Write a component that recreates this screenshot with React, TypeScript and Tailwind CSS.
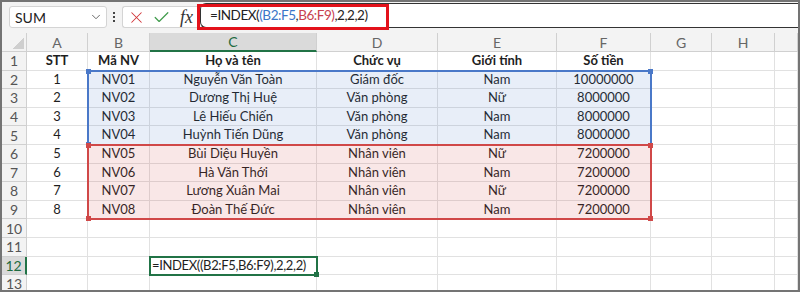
import { ChevronDown, X, Check } from 'lucide-react';

const cols = ['A', 'B', 'C', 'D', 'E', 'F', 'G', 'H', ''];

const header = ['STT', 'Mã NV', 'Họ và tên', 'Chức vụ', 'Giới tính', 'Số tiền'];

const rows = [
    ['1', 'NV01', 'Nguyễn Văn Toàn', 'Giám đốc', 'Nam', '10000000'],
    ['2', 'NV02', 'Dương Thị Huệ', 'Văn phòng', 'Nữ', '8000000'],
    ['3', 'NV03', 'Lê Hiếu Chiến', 'Văn phòng', 'Nam', '8000000'],
    ['4', 'NV04', 'Huỳnh Tiến Dũng', 'Văn phòng', 'Nam', '8000000'],
    ['5', 'NV05', 'Bùi Diệu Huyền', 'Nhân viên', 'Nữ', '7200000'],
    ['6', 'NV06', 'Hà Văn Thới', 'Nhân viên', 'Nam', '7200000'],
    ['7', 'NV07', 'Lương Xuân Mai', 'Nhân viên', 'Nữ', '7200000'],
    ['8', 'NV08', 'Đoàn Thế Đức', 'Nhân viên', 'Nam', '7200000'],
];

const formula = '=INDEX((B2:F5,B6:F9),2,2,2)';

// same track sizes for the cell grid and the overlay grid
const gridCls =
    'grid grid-cols-[25px_61px_62px_167px_121px_119px_94px_61px_63px_1fr] grid-rows-[19px_repeat(13,18.6px)]';

function Handle({ pos, color }: { pos: string; color: string }) {
    return <span className={`absolute w-[5px] h-[5px] ${pos} ${color}`} />;
}

function TopBar() {
    return (
        <div className="relative flex h-[31px] items-start">
            <div className="mt-[4px] ml-[7px] flex h-[22px] w-[98px] items-center justify-between rounded-[3px] border border-[#d4d4d4] bg-white pl-[5px] pr-[3px] text-[14px] text-[#222]">
                SUM
                <ChevronDown size={14} strokeWidth={1.5} color="#555" />
            </div>
            <div className="ml-[6px] mt-[10px] flex flex-col gap-[2px]">
                <span className="h-[2px] w-[2px] bg-[#444]" />
                <span className="h-[2px] w-[2px] bg-[#444]" />
                <span className="h-[2px] w-[2px] bg-[#444]" />
            </div>
            <div className="mt-[4px] ml-[7px] flex h-[22px] w-[75px] items-center gap-[6px] rounded-l-[3px] border border-r-0 border-[#d4d4d4] bg-white pl-[4px]">
                <X size={19} strokeWidth={1.3} color="#d13438" />
                <Check size={19} strokeWidth={1.5} color="#3f9b4b" />
                <span className="ml-[3px] font-['Liberation_Serif',serif] text-[18px] italic leading-none text-[#333]">fx</span>
            </div>
            <div className="mt-[1px] ml-[3px] flex h-[25px] flex-1 items-center rounded-l-[6px] border-y border-l border-[#333] bg-white pl-[9px] text-[13.5px] tracking-[-0.45px] text-[#222]">
                =INDEX(
                <span className="text-[#3b76c8]">(B2:F5</span>,
                <span className="text-[#c8424f]">B6:F9)</span>,2,2,2)
            </div>
            <div className="absolute left-[195px] top-[2px] h-[26px] w-[192px] border-[3px] border-[#e3121b]" />
        </div>
    );
}

function Cells() {
    return (
        <div className={`${gridCls} col-start-1 row-start-1 bg-white text-[13px] text-[#1e1e1e]`}>
            <div className="relative border-b border-r border-[#d0d0d0] bg-[#f3f3f3]">
                <span className="absolute bottom-[2px] right-[2px] h-[11px] w-[11px] bg-[linear-gradient(135deg,transparent_50%,#cfcfcf_50%)]" />
            </div>
            {cols.map((c, i) =>
                c === 'C' ? (
                    <div
                        key={i}
                        className="flex items-center justify-center border-b-2 border-r border-b-[#217346] border-r-[#d0d0d0] bg-[#dadada] text-[14px] text-[#1d6b40]"
                    >
                        {c}
                    </div>
                ) : (
                    <div
                        key={i}
                        className="flex items-center justify-center border-b border-r border-[#d0d0d0] bg-[#f3f3f3] text-[14px] text-[#666]"
                    >
                        {c}
                    </div>
                )
            )}
            {Array.from({ length: 13 }).map((_, r) => {
                const n = r + 1;
                const data = n === 1 ? header : rows[n - 2];
                return [
                    n === 12 ? (
                        <div
                            key={`h${n}`}
                            className="flex items-center justify-center border-b border-r-2 border-b-[#d0d0d0] border-r-[#217346] bg-[#dadada] text-[14px] text-[#1d6b40]"
                        >
                            {n}
                        </div>
                    ) : (
                        <div
                            key={`h${n}`}
                            className="flex items-center justify-center border-b border-r border-[#d0d0d0] bg-[#f3f3f3] text-[14px] text-[#555]"
                        >
                            {n}
                        </div>
                    ),
                    ...cols.map((_, ci) => (
                        <div
                            key={`${n}-${ci}`}
                            className={`flex items-center whitespace-nowrap border-b border-r border-[#e1e1e1] ${
                                n === 12 && ci === 2 ? 'justify-start pl-[2px] tracking-[-0.35px]' : 'justify-center'
                            } ${n === 1 ? 'font-bold' : ''}`}
                        >
                            {data && ci < 6 ? data[ci] : n === 12 && ci === 2 ? formula : ''}
                        </div>
                    )),
                ];
            })}
        </div>
    );
}

function Overlays() {
    return (
        <div className={`${gridCls} pointer-events-none col-start-1 row-start-1`}>
            <div className="relative col-start-3 col-end-8 row-start-3 row-end-7 -m-px border-2 border-[#4a78c8] bg-[#4472c4]/[0.12]">
                <Handle pos="-left-[3px] -top-[3px]" color="bg-[#4a78c8]" />
                <Handle pos="-right-[3px] -top-[3px]" color="bg-[#4a78c8]" />
                <Handle pos="-left-[3px] -bottom-[3px]" color="bg-[#4a78c8]" />
            </div>
            <div className="relative col-start-3 col-end-8 row-start-7 row-end-11 -m-px border-2 border-[#d04848] bg-[#d04848]/[0.13]">
                <Handle pos="-left-[3px] -top-[3px]" color="bg-[#d04848]" />
                <Handle pos="-right-[3px] -top-[3px]" color="bg-[#d04848]" />
                <Handle pos="-left-[3px] -bottom-[3px]" color="bg-[#d04848]" />
                <Handle pos="-right-[3px] -bottom-[3px]" color="bg-[#d04848]" />
            </div>
            <div className="relative col-start-4 row-start-13 -m-px border-2 border-[#217346]">
                <Handle pos="-right-[3px] -bottom-[3px]" color="bg-[#217346]" />
            </div>
        </div>
    );
}

export default function App() {
    return (
        <div className="h-[292px] w-[800px] overflow-hidden border-2 border-[#747474] bg-[#f3f3f3] font-['Lato',sans-serif]">
            <TopBar />
            <div className="grid">
                <Cells />
                <Overlays />
            </div>
        </div>
    );
}
